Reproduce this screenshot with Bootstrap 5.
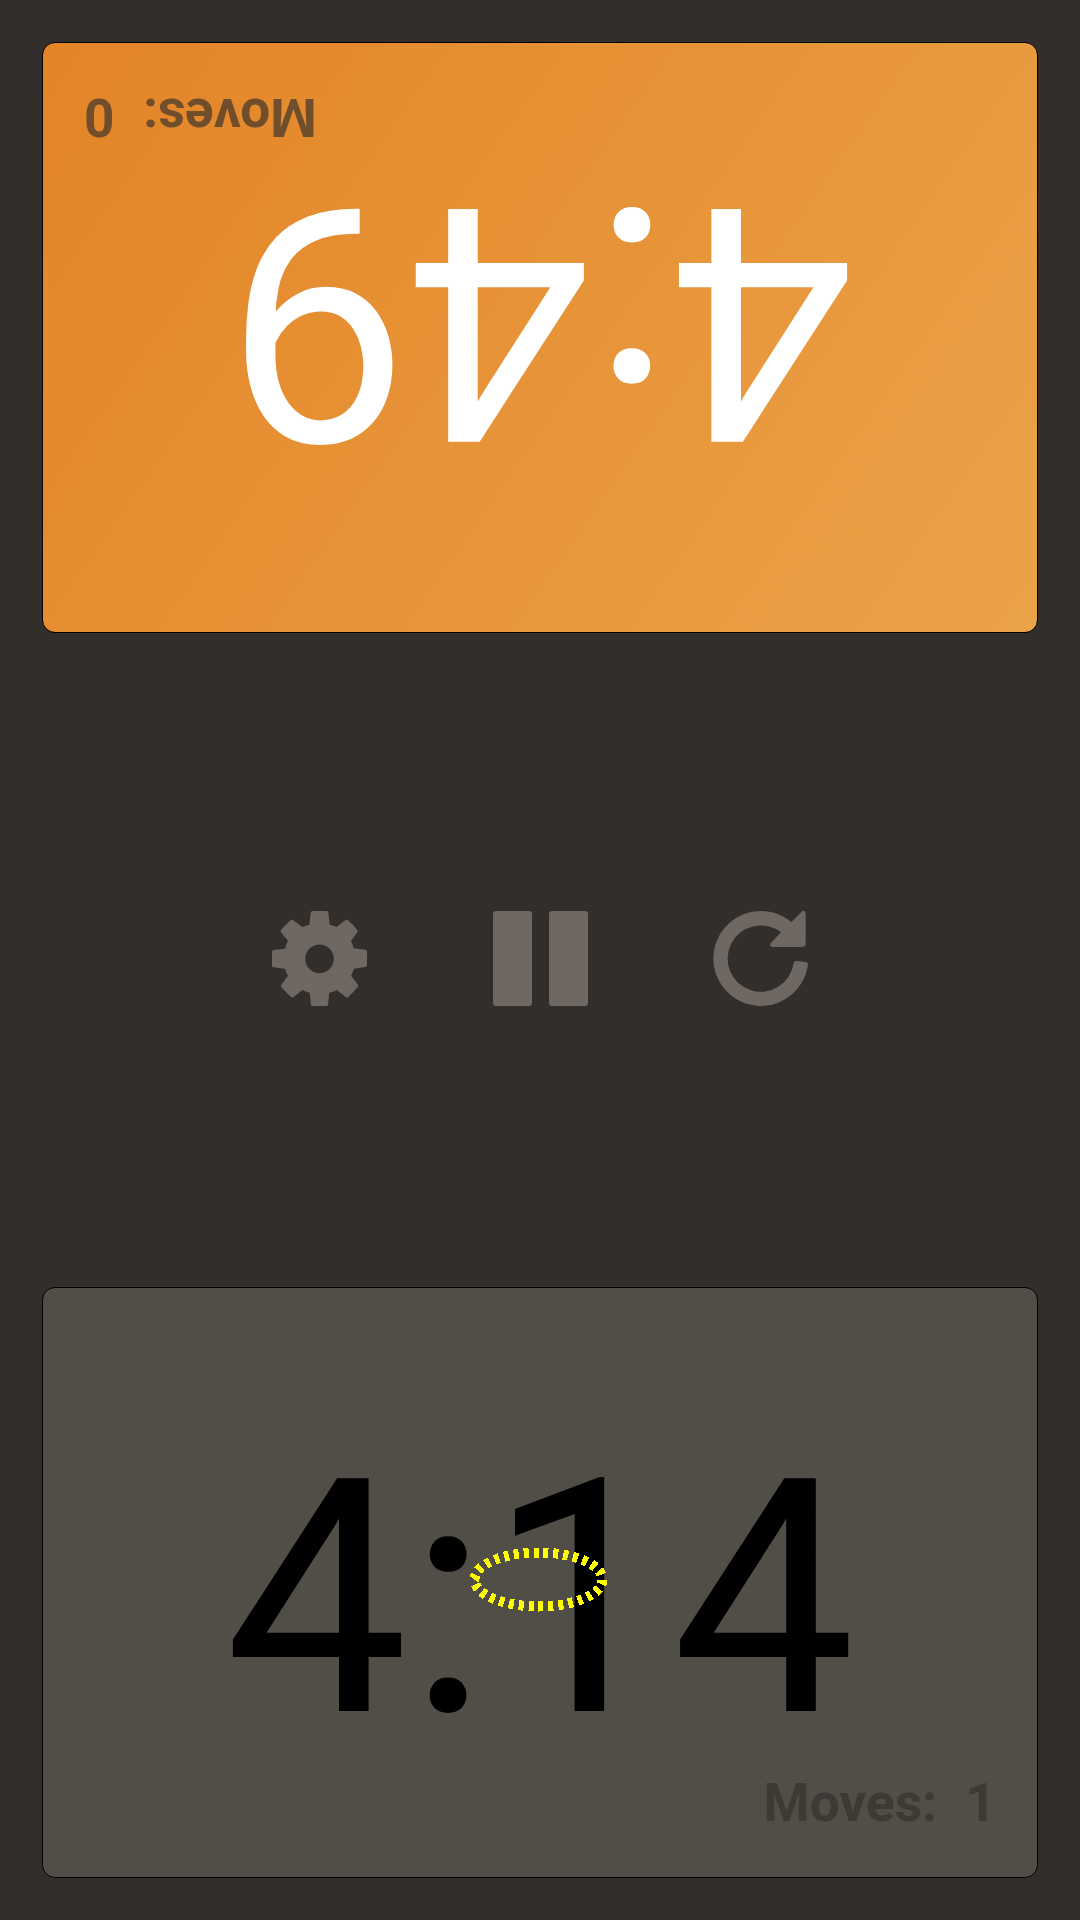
<!DOCTYPE html>
<html lang="en">
<head>
<meta charset="utf-8">
<meta name="viewport" content="width=device-width, initial-scale=1">
<title>Chess Clock</title>
<link href="https://cdn.jsdelivr.net/npm/bootstrap@5.3.0/dist/css/bootstrap.min.css" rel="stylesheet">
<style>
  body { background: #322e2b; font-family: Roboto, "Liberation Sans", sans-serif; }
  .clock-app { height: 1920px; width: 1080px; padding: 42px; }
  .player { height: 591px; border: 1px solid #000; border-radius: 13px; padding: 0 41px 44px; }
  .player-active { background: linear-gradient(125deg, #eba348, #e38427); color: #fff; transform: rotate(180deg); }
  .player-idle { background: #514e48; color: #000; }
  .time { font-size: 327.3px; line-height: 240px; margin-bottom: 54px; }
  .moves { font-size: 53.2px; line-height: 60px; font-weight: 700; gap: 28.5px; }
  .player-active .moves { color: #704e2b; }
  .player-idle .moves { color: #3d3934; }
  .controls { gap: 113px; padding-bottom: 2px; }
  .control { width: 108px; height: 108px; color: #6f6761; }
  .control svg { display: block; width: 108px; height: 108px; fill: currentColor; }
  .marker { left: 426px; top: 257px; width: 141px; height: 68px; }
</style>
<script src="https://cdn.jsdelivr.net/npm/bootstrap@5.3.0/dist/js/bootstrap.bundle.min.js"></script>
</head>
<body>
<main class="clock-app d-flex flex-column">
  <section class="player player-active d-flex flex-column justify-content-end">
    <div class="time text-center">4:49</div>
    <div class="moves d-flex justify-content-end"><span>Moves:</span><span>0</span></div>
  </section>

  <nav class="controls flex-grow-1 d-flex justify-content-center align-items-center">
    <button class="control btn p-0 border-0" aria-label="Settings">
      <svg viewBox="0 0 324 324"><path fill-rule="evenodd" d="M143 18H185Q189 18 190 23L194 59Q205 61 215 66L241 46Q245 43 249 46Q264 59 277 75Q280 78 277 82L258 108Q263 119 266 130L301 134Q306 135 306 139V181Q306 185 301 186L267 191Q264 202 258 212L279 239Q281 243 278 246Q266 261 250 276Q246 279 242 276L215 255Q205 261 193 263L189 299Q188 303 184 303H143Q139 303 138 299L134 263Q123 261 113 255L86 276Q82 279 78 276Q62 262 49 246Q46 243 49 239L69 212Q63 202 60 191L26 187Q21 186 21 182V140Q21 136 26 135L60 131Q63 119 69 108L48 82Q45 78 48 75Q61 60 77 46Q81 43 85 46L112 66Q123 61 133 59L137 23Q138 18 143 18ZM163.500 118.500a43 43 0 1 0 .01 0Z"/></svg>
    </button>
    <button class="control btn p-0 border-0" aria-label="Pause">
      <svg viewBox="0 0 324 324"><rect x="21" y="18" width="117" height="285" rx="10"/><rect x="189" y="18" width="117" height="285" rx="10"/></svg>
    </button>
    <button class="control btn p-0 border-0" aria-label="Restart">
      <svg viewBox="-3 0 324 324"><path d="M250 51L281 20Q285 16 289 18Q293 20 293 25V114Q293 120 291 122Q288 126 282 126H195Q188 126 186 120Q185 117 189 113L219 82A99.500 99.500 0 1 0 257 174Q258 168 264 168L293 171Q300 172 300 178A142.500 142.500 0 1 1 250 51Z"/></svg>
    </button>
  </nav>

  <section class="player player-idle position-relative d-flex flex-column justify-content-end">
    <div class="time text-center">4:14</div>
    <div class="moves d-flex justify-content-end"><span>Moves:</span><span>1</span></div>
    <svg class="marker position-absolute" viewBox="0 0 141 68" shape-rendering="crispEdges"><ellipse cx="69.5" cy="34.5" rx="64" ry="27" pathLength="300" fill="none" stroke="#ff0" stroke-width="10" stroke-dasharray="5 5"/></svg>
  </section>
</main>
</body>
</html>
